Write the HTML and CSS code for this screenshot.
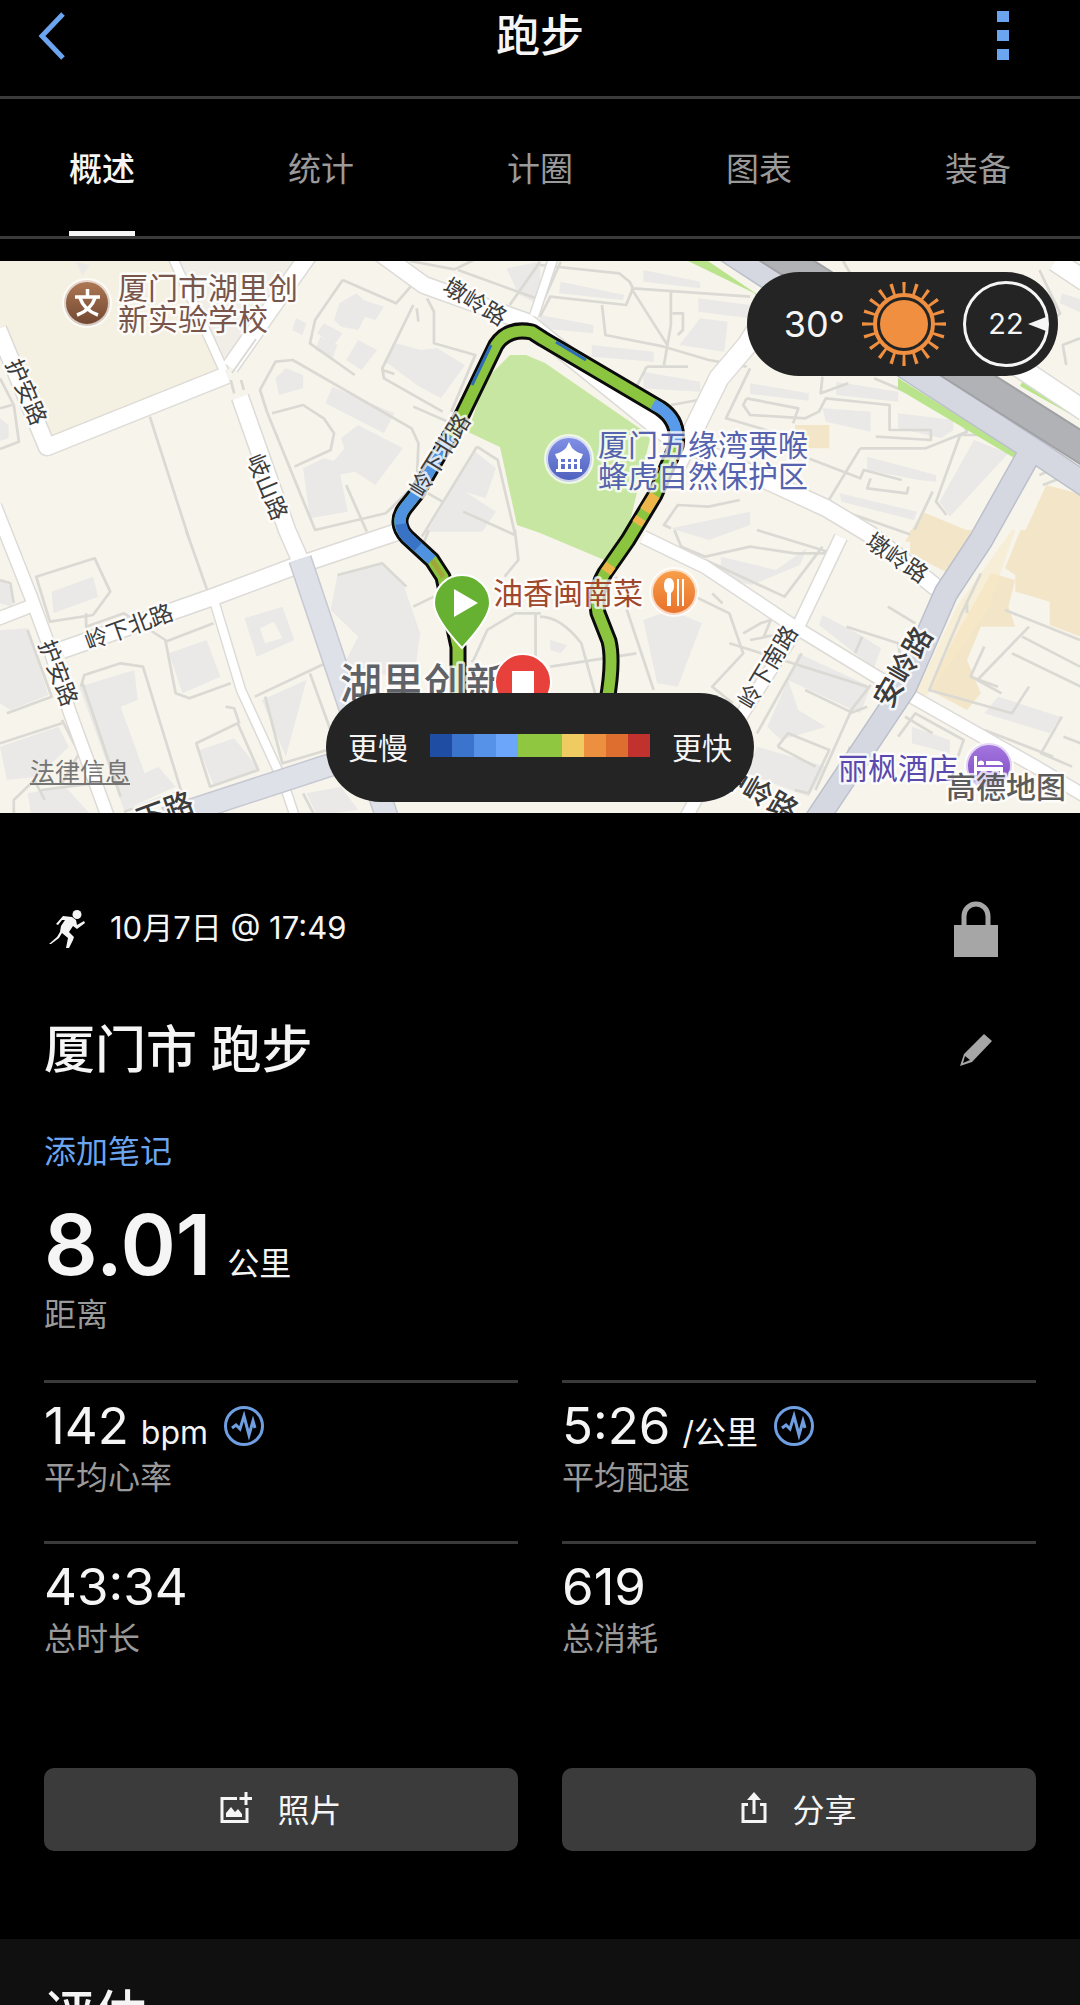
FILE: index.html
```html
<!DOCTYPE html>
<html lang="zh-CN">
  <head>
    <meta charset="UTF-8" />
    <meta name="viewport" content="width=device-width, initial-scale=1.0" />
    <title>跑步</title>
    <link rel="stylesheet" href="styles.css">
  </head>
  <body>
    <header class="top-bar">
      <button class="icon-btn" aria-label="返回">
        <svg width="28" height="48" viewBox="0 0 28 48"><path d="M25 2 4 24l21 22" fill="none" stroke="#6ba5f0" stroke-width="5" /></svg>
      </button>
      <h1>跑步</h1>
      <button class="icon-btn more" aria-label="更多">
        <svg width="12" height="50" viewBox="0 0 12 50" fill="#6ba5f0"><path d="M0 0h12v11H0zM0 19h12v11H0zM0 38h12v11H0z" /></svg>
      </button>
    </header>

    <nav class="tabs">
      <a href="#overview" class="active">概述</a>
      <a href="#stats">统计</a>
      <a href="#laps">计圈</a>
      <a href="#charts">图表</a>
      <a href="#gear">装备</a>
    </nav>

    <main id="overview">
      <section class="map">
        <svg class="map-canvas" viewBox="0 0 1080 552">
          <defs>
            <linearGradient id="brown" x2="0" y2="1"><stop stop-color="#b07a55" /><stop offset="1" stop-color="#6f4530" /></linearGradient>
            <linearGradient id="indigo" x2="0" y2="1"><stop stop-color="#8292e6" /><stop offset="1" stop-color="#4d5fbd" /></linearGradient>
            <linearGradient id="orange" x2="0" y2="1"><stop stop-color="#f8a04a" /><stop offset="1" stop-color="#e8702a" /></linearGradient>
            <linearGradient id="purple" x2="0" y2="1"><stop stop-color="#a678e0" /><stop offset="1" stop-color="#7a48c0" /></linearGradient>
          </defs>
          <rect width="1080" height="552" fill="#f7f4ec" />
          <path d="M0 0h300l-74 112L48 186 0 70z" fill="#f4f0e2" />
          <path d="M172 0h133l-76 106z" fill="#f1eee8" />

          <!-- buildings and lanes, north west -->
          <g transform="translate(0 -6) scale(.3444 .3333)">
            <path class="building" d="M985 145l50-30 20 20 60 20-25 40-30-10-20 40-50-10-20-20zM940 205l55 30-25 35-50-35zM930 245l50 25-15 40-50-25zM1040 255l55 30-45 60-45-30zM1150 265l70 20 50-5 80 50-70 100-70-40-90-70zM965 395l180 80-30 60-170-90zM800 370l30-30 50 20v40l-70 20zM1040 510l130 70-80 110-60-40-50 10-20-30 40-50-10-30zM880 640l60-30 40 10 30 150-110 20zM1380 590l60 50-30 90-60-20 90 60-40 60h-160zM1470 40l98-20v130l-60-30zM0 490l25 20v40l-25 8zM860 190l30 15-12 35-30-15zM220 20l40 10-20 30z" />
            <path class="lane" d="M995 75l155 70 55-65h30M995 75l-80 120-15 70 130 95M1200 150l-90 190 5 30 170 100M1240 130l20 40v95l120 35-70 170M1110 345l35 12M1200 455l100 45M755 405l45-85 50-5 345 205 20 45-5 120-90 90-205 50-140-355zM790 475l90-25 60 40 30 45-10 50-105 50M1005 690l60 140M1210 160l5 40M435 485l115 370M1200 690l85 50M1385 575l60 40 50 220M1385 575l-160 270M1345 770l150 70M1190 18l130 25 60-30M1330 45l240 90M1480 150l88-130M1450 350l60 25 60-20M0 370l40 80 15 110-55 22M0 460l35-10M670 375l10 40M700 375l8 30" />
          </g>

          <!-- north east -->
          <g transform="translate(540 -6) scale(.3444 .3333)">
            <path class="building" d="M60 80l185 40-5 15-185-20zM300 45l165 35v20l-165-20zM0 180l155 30v25L0 220zM150 270l180 20v30l-180-15zM460 130l150 20v40l-150-20zM465 190l80 10-10 90-130-20zM300 350l165 30v30l-165-10zM610 385l170 30v22l-170-20zM860 380l180 30v30l-180-20zM820 460l140 10v60l-130-30zM1040 475l160 20v30l-35 25-125-30zM950 605l200 55v20l-50-5-150-30zM870 715l225 55-10 25-210-55zM1260 555l100 40-170 190-30-45zM1515 115l60 20v40l-65-30zM380 820l230-50v40l-120 45z" />
            <path class="tan" d="M1470 690l110 30v150h-190zM1110 770l140 60v30h-190zM740 510h100v70h-90z" />
            <path class="lane" d="M0 30l230 25 30 25 10 20-20 50-220-25-30 60M60 20L0 160M270 100l340 25M265 100l80 130 25 40-10 60M380 110v100l-10 60M385 175h30v50l-15 15M180 150l10 90 170 35 130 40 110 20M310 335h120M310 335l-40 80M380 450l80-15 60-110M600 430l-10 20 20 30 160 10 40-20 20-40 185 20v75h120v30l-160-10M600 430l150 30-15 45M820 365l-5 50 80-30M610 340l-70 150 200 60-10 40 200 80 10-25 110 30M930 580h190l120-50-20-50-250-110M930 580l-100 170 250 90 60-130M960 670l-10 30 115 15 5-20M1280 540l-60 0-70 200 30 40M1450 45l60 130-40 40-30 60M1460 690l100-40M1450 660l70-30M1500 50l80 60M380 820l-20-10 40-60 90 5 90-20M880 18l40 70M1568 250l-50 20 10 60" />
          </g>

          <!-- south west -->
          <g transform="translate(0 269) scale(.3444 .3333)">
            <path class="building" d="M150 185l120-45 15 60-130 50zM0 300l80-5 60 200-110 45-30-20zM490 370l110-40 40 110-110 50zM230 470l160-50 10 90-50 20 70 200 40-20 50 60-150 70zM0 650l170-60 30 60-90 90-90 10zM710 265l110-35 35 100-110 50zM980 135l130-35 60 60 50 150-20 150-200-60 40-80-80-80zM760 510l130-60-60 230zM580 660l100-35 70 90-130 50zM890 790l100-20 50 70-120 15zM80 790l110-20 70 80H90zM0 150l35 20v60L0 220z" />
            <path d="M755 295l40-20 25 50-50 15z" fill="#f7f4ec" />
            <path class="lane" d="M105 140l170-55 45 100-50 70-125 20zM250 250v40l110-40 120 80 30 160 40 15 120-45M480 335l140-55M235 470l10-35 105-35 65 10 110 370M350 800l-110-340M360 845l170-65M540 0l65 190M740 500l205-100M900 430l70 200M770 500l50 200 130-40M570 640l120-60 60 140-140 50zM695 580l-15-45-25-5M0 640l180-60M20 550l130-50L80 300M180 570l50 100-50 90M40 850v-40l60-60 30 60M120 780l150-20M880 790l30 60M980 135l130-35 70 70M1200 230l60-30M1375 390l40-90 80-50h75M1555 250v140M1370 390l30 50M1260 100l-30-60 15-40M1465 140l40-50-10-90M0 150l30 10 10 60" />
          </g>

          <!-- south east -->
          <g transform="translate(540 269) scale(.3444 .3333)">
            <path class="building" d="M300 270l80-30 90 40-70 190-60-10zM30 330l50 15-20 25-30-10zM525 80l160 40 90-65-20 50-140 60-90-20zM820 255l110 60 60 40-20 60-160-130zM750 370l210 100-30 80-210-100zM720 450l30 90 80 50-130 40-40-40zM630 650l200 60-50 90-180-70zM1330 500l180 60-30 50-190-60zM1080 590l110 40v40l-110-30z" />
            <path class="tan" d="M1395 0h175v320l-90-35v-70l-100-30v-50l-30-20zM1075 0h180l-20 40-50 90-110-60zM1310 130l70 20-20 80 20 60-100 0-40 100 40 100-40 50-110-60 70-150z" />
            <path d="M1370 0l-160 230-120 260 30 10 180-260 80-240z" fill="#f7e9c6" opacity=".55" />
            <path class="lane" d="M390 0l20 50 70 30 130-30 130 20 110 0L630 0M480 90l230 110 110-150M450 200l100 50 40 120-90 100 60 50M590 310l50-30 30-10-20 50 90-10M500 190l30 30M610 330l50-10M0 260q60 0 120 80l40 150M220 140l110 340M30 410l250-40M760 370L630 610M770 480l130 65 60-80M800 780l100-230 50-20M690 650l30-40 120 50-60 130-40-10M690 650l110 60M840 850l60-200M890 290l150 50 10 60M1010 230l80 50M935 320l-20 50M1280 130l-60 130-90 220 240 70 50-80M1420 290l-150 160 70 40M1350 240l218 90M1400 320l168 90M1370 370l200 100M1290 350l-40 90 80 30M1515 560l-60 110 90 40M1520 620l50 20M1040 620l50-70 140 80-20 60M1060 560l80 50M1240 210v40M950 470l-400-130M1290 600l200 80" />
          </g>

          <!-- parks -->
          <path d="M485 119l25-25h16l19 8 100 69 5 7-24 99-17 24-69-29-23-8-17-78-32-15z" fill="#c7e6a2" />
          <path d="M688 0l66 32 10 14 6-4-62-42zM898 117l120 75-2 6-118-70zM1028 110l50 28-8 15-50-28z" fill="#b9e48c" />

          <!-- roads: casing first, surface on top -->
          <g class="casing">
            <path stroke-width="11" d="M172-5l52 115M554-5l-20 60M213 336l28 93 38 83M286 529l10 30" />
            <path stroke-width="15" d="M-5 245l36 91 17 46 21 67 40 110M-5 359l36-14M643 276l62 30 90 60 82 50 76 43 83 47 54 32M841 276l-43 90-55 86-60 110" />
            <path stroke-width="19" d="M380-8l44 32 103 37 140 113 159 73 45 27 72 58M62 389l151-53 80-30 107-36M240 136l47 133 14 32M310-8L230 106M-2 68l49 118 180-72" />
            <path stroke-width="22" d="M805-5l-58 89-28 33-28 57-16 32M1055 0l30 20M1010 100l75 50" />
          </g>
          <g class="surface">
            <path stroke-width="8" d="M172-5l52 115M554-5l-20 60M213 336l28 93 38 83M286 529l10 30" />
            <path stroke-width="12" d="M-5 245l36 91 17 46 21 67 40 110M-5 359l36-14M643 276l62 30 90 60 82 50 76 43 83 47 54 32M841 276l-43 90-55 86-60 110" />
            <path stroke-width="16" d="M380-8l44 32 103 37 140 113 159 73 45 27 72 58M62 389l151-53 80-30 107-36M240 136l47 133 14 32M310-8L230 106M-2 68l49 118 180-72" />
            <path stroke-width="19" d="M805-5l-58 89-28 33-28 57-16 32M1055 0l30 20M1010 100l75 50" />
          </g>
          <path d="M232 112l24-34" stroke="#dcdad6" stroke-width="2" fill="none" />
          <path d="M300 298l45 134 44 130M165 558l159-52 100-30" fill="none" stroke="#c6c9d2" stroke-width="24" />
          <path d="M300 298l45 134 44 130M165 558l159-52 100-30" fill="none" stroke="#dfe1e8" stroke-width="21" />
          <path d="M700-28l230 150 102 66-51 91-35 53-41 94-90 135M1032 188l60 40" fill="none" stroke="#bcc0cb" stroke-width="25" />
          <path d="M700-28l230 150 102 66-51 91-35 53-41 94-90 135M1032 188l60 40" fill="none" stroke="#d5d8e1" stroke-width="22" />
          <path d="M740-30l230 146 120 76" fill="none" stroke="#a1a2a6" stroke-width="31" />
          <path d="M740-30l230 146 120 76" fill="none" stroke="#b1b2b5" stroke-width="27" />

          <g class="road-names">
            <text transform="translate(475 41) rotate(31)">墩岭路</text>
            <text transform="translate(26 131) rotate(67)">护安路</text>
            <text transform="translate(267 226) rotate(67)">岐山路</text>
            <text transform="translate(129 366) rotate(-20)">岭下北路</text>
            <text transform="translate(58 412) rotate(69)">护安路</text>
            <text transform="translate(897 297) rotate(34)">墩岭路</text>
            <text transform="translate(768 406) rotate(-59)">岭下南路</text>
          </g>

          <!-- recorded track -->
          <g fill="none" stroke-linejoin="round">
            <path d="M458 432V386L443 316 432 299 407 276Q394 262 405 247L417 232 463 152 496 84Q508 66 532 71L543 78 660 147Q680 160 676 185L655 234 628 279 605 312Q594 330 598 352L609 380Q614 400 607 440" stroke="#0b0b0b" stroke-width="17" />
            <path d="M458 432V386L443 316 432 299 407 276Q394 262 405 247L417 232 463 152 496 84Q508 66 532 71L543 78 660 147Q680 160 676 185L655 234 628 279 605 312Q594 330 598 352L609 380Q614 400 607 440" stroke="#8bc53f" stroke-width="11" />
            <path d="M432 299L407 276Q394 262 405 247L417 232 450 175" stroke="#4f92e0" stroke-width="11" />
            <path d="M418 286L407 276Q402 270 401 263" stroke="#3973c6" stroke-width="11" />
            <path d="M653 143l7 4Q680 160 676 185" stroke="#5a9aea" stroke-width="11" />
            <path d="M472 124l19-40M556 81l30 18" stroke="#2f6cb8" stroke-width="3" />
            <path d="M655 234l-10 16M641 257l-4 6M611 304l-5 7" stroke="#eeb64a" stroke-width="11" />
            <path d="M432 299l11 17" stroke="#a0a63a" stroke-width="5" />
          </g>
          <g class="road-names">
            <text transform="translate(440 194) rotate(-58)">岭下北路</text>
          </g>
          <g class="road-names major">
            <text transform="translate(903 406) rotate(-60)">安岭路</text>
            <text transform="translate(758 531) rotate(30)">钟岭路</text>
            <text transform="translate(165 550) rotate(-20)">下路</text>
          </g>

          <!-- places -->
          <g stroke="#fff" stroke-opacity=".7" stroke-width="4">
            <circle cx="87" cy="42" r="23" fill="url(#brown)" />
            <circle cx="569" cy="198" r="23" fill="url(#indigo)" />
            <circle cx="674" cy="331" r="23" fill="url(#orange)" />
            <circle cx="989" cy="505" r="23" fill="url(#purple)" />
          </g>
          <path d="M75 36h25M87.500 28v7M80 37q4 12 18 17M95 37q-4 12-18 17" fill="none" stroke="#fff" stroke-width="3.500" />
          <g fill="#fff">
            <path d="M569 181l3 6q5 5 11 6l-2 5h-24l-2-5q6-1 11-6z" />
            <path d="M558 197h3v11h-3zM565 197h3v11h-3zM571 197h3v11h-3zM577 197h3v11h-3zM558 201h22v2h-22zM556 208h26v3h-26z" />
            <path d="M669 317q5 0 5 8 0 5-3 7v13h-4v-13q-3-2-3-7 0-8 5-8zM677 318h2v27h-2zM682 318h2v27h-2z" />
            <path d="M974 495h3v11h26v8h-3v-4h-23v4h-3zM978 501q3-3 6 0v3h-6zM986 500h13q4 1 4 4h-17z" />
          </g>
          <g class="places">
            <text fill="#79564b"><tspan x="118" y="38">厦门市湖里创</tspan><tspan x="118" y="69">新实验学校</tspan></text>
            <text fill="#5562ae"><tspan x="598" y="195">厦门五缘湾栗喉</tspan><tspan x="598" y="226">蜂虎自然保护区</tspan></text>
            <text x="493" y="343" fill="#a0482b">油香闽南菜</text>
            <text x="838" y="518" fill="#5a4aae">丽枫酒店</text>
            <text x="340" y="438" class="district">湖里创新</text>
            <text x="946" y="537" class="vendor">高德地图</text>
          </g>

          <!-- start and finish -->
          <path d="M462 387Q434 357 434 342a28 28 0 0 1 56 0Q490 357 462 387z" fill="#66b132" stroke="#fff" stroke-width="2" />
          <path d="M454 328v28l24-14z" fill="#fff" />
          <circle cx="523" cy="421" r="28" fill="#e8403a" stroke="#fff" stroke-width="2" />
          <path d="M512 410h22v24h-22z" fill="#fff" />
        </svg>

        <div class="weather">
          <span class="temp">30°</span>
          <svg width="86" height="86" viewBox="-43 -43 86 86">
            <circle r="24" fill="#ef8f3f" />
            <circle r="29" fill="none" stroke="#ef8f3f" stroke-width="4" />
            <circle r="36" fill="none" stroke="#ef8f3f" stroke-width="12" pathLength="180" stroke-dasharray="2.400 6.600" stroke-dashoffset="1.200" />
          </svg>
          <span class="wind">22
            <svg width="18" height="14" viewBox="0 0 18 14"><path d="M0 7 18 0v14z" fill="#f5f5f5" /></svg>
          </span>
        </div>

        <div class="legend">
          <span>更慢</span>
          <div class="pace-scale">
            <i class="pace-1"></i><i class="pace-2"></i><i class="pace-3"></i><i class="pace-4"></i><i class="pace-5"></i><i class="pace-5"></i><i class="pace-6"></i><i class="pace-7"></i><i class="pace-8"></i><i class="pace-9"></i>
          </div>
          <span>更快</span>
        </div>

        <a class="legal" href="#legal">法律信息</a>
      </section>

      <section class="details">
        <div class="row">
          <svg class="runner" width="36" height="38" viewBox="0 0 36 38" fill="#f5f5f5">
            <circle cx="28" cy="4.500" r="4.500" />
            <path d="M14 6l9 1 4 3 1 5 7-4 1 2-8 6-4-3-4 6 5 5-1 3-4 8h-3l2-10-6-5-3 5-8 6-2 0 8-7 3-5 1-6 4-6h-3l-4 5-2-1z" />
          </svg>
          <p class="date">10月7日 @ 17:49</p>
          <button class="icon-btn" aria-label="隐私">
            <svg width="44" height="56" viewBox="0 0 44 56"><path d="M0 24h44v32H0z" fill="#a6a6a6" /><path d="M10 26V15a12 12 0 0 1 24 0v11" fill="none" stroke="#a6a6a6" stroke-width="5" /></svg>
          </button>
        </div>

        <div class="row">
          <h2>厦门市 跑步</h2>
          <button class="icon-btn edit" aria-label="编辑">
            <svg width="32" height="32" viewBox="0 0 32 32"><path fill-rule="evenodd" d="M24 0l8 7-20 21-12 4 4-12zM5 22l-2 7 7-3z" fill="#a6a6a6" /></svg>
          </button>
        </div>

        <a class="add-note" href="#note">添加笔记</a>

        <div class="distance">
          <p class="value">8.01 <small>公里</small></p>
          <p class="label">距离</p>
        </div>

        <div class="stats">
          <div class="stat">
            <p class="value">142 <small>bpm</small>
              <svg class="pulse" width="40" height="40" viewBox="0 0 40 40"><circle cx="20" cy="20" r="18.500" /><path d="M8 22l4-3 4 4 4-13 5 19 4-14 2 7" /></svg>
            </p>
            <p class="label">平均心率</p>
          </div>
          <div class="stat">
            <p class="value">5:26 <small>/公里</small>
              <svg class="pulse" width="40" height="40" viewBox="0 0 40 40"><circle cx="20" cy="20" r="18.500" /><path d="M8 22l4-3 4 4 4-13 5 19 4-14 2 7" /></svg>
            </p>
            <p class="label">平均配速</p>
          </div>
          <div class="stat">
            <p class="value">43:34</p>
            <p class="label">总时长</p>
          </div>
          <div class="stat">
            <p class="value">619</p>
            <p class="label">总消耗</p>
          </div>
        </div>

        <div class="actions">
          <button>
            <svg width="32" height="32" viewBox="0 0 32 32" fill="none" stroke="#f5f5f5" stroke-width="3"><path d="M17 6.500H2v23h25V16M26 0v13M19.500 6.500H32" /><path d="M6 25v-4l5-6 4 5 3-3 4 5v3z" fill="#f5f5f5" stroke="none" /></svg>
            照片
          </button>
          <button>
            <svg width="26" height="32" viewBox="0 0 26 32" fill="none" stroke="#f5f5f5" stroke-width="3"><path d="M7 12.500H2v17h22v-17h-5M13 22V4" /><path d="M13 0l7 8H6z" fill="#f5f5f5" stroke="none" /></svg>
            分享
          </button>
        </div>
      </section>

      <section class="evaluation">
        <h2>评估</h2>
      </section>
    </main>
  </body>
</html>
```

FILE: styles.css
```css
* {
  box-sizing: border-box;
}

body {
  margin: 0;
  background-color: #000;
  color: #f5f5f5;
  font-family: Inter, "Noto Sans CJK SC", sans-serif;
  font-size: 32px;
}

h1,
h2,
p {
  margin: 0;
}

a {
  text-decoration: none;
}

svg {
  display: block;
}

button {
  font-family: inherit;
  cursor: pointer;
}

.icon-btn {
  padding: 0;
  border: none;
  background: none;
}

/* Header */
.top-bar {
  display: grid;
  grid-template-columns: 1fr auto 1fr;
  align-items: center;
  padding: 8px 38px 32px;
  border-bottom: 3px solid #3a3a3a;
}

.top-bar h1 {
  font-size: 44px;
  font-weight: 500;
  line-height: 56px;
}

.icon-btn {
  justify-self: start;
}

.more {
  justify-self: end;
  margin-right: 33px;
}

/* Tabs */
.tabs {
  display: flex;
  justify-content: space-between;
  padding: 0 69px;
  border-bottom: 3px solid #3a3a3a;
}

.tabs a {
  padding-top: 9px;
  border-bottom: 5px solid transparent;
  color: #9a9a9a;
  font-size: 33px;
  line-height: 123px;
}

.tabs a.active {
  border-color: #f5f5f5;
  color: #f5f5f5;
  font-weight: 500;
}

/* Map */
.map {
  position: relative;
  margin-top: 22px;
  overflow: hidden;
}

.map-canvas {
  width: 100%;
  height: auto;
}

.building {
  fill: #eae9e7;
}

.tan {
  fill: #f3e6c8;
}

.lane {
  fill: none;
  stroke: #dad9d3;
  stroke-width: 8;
  stroke-linejoin: round;
}

.casing {
  fill: none;
  stroke: #dddbd7;
  stroke-linejoin: round;
}

.surface {
  fill: none;
  stroke: #fff;
  stroke-linejoin: round;
}

.road-names text,
.places text {
  paint-order: stroke;
  stroke: rgba(255, 255, 255, 0.8);
  stroke-width: 5px;
  stroke-linejoin: round;
}

.road-names text {
  fill: #3c3c3c;
  font-size: 23px;
  text-anchor: middle;
  dominant-baseline: central;
}

.road-names.major text {
  font-size: 29px;
  font-weight: 500;
}

.places text {
  font-size: 30px;
}

.places .district {
  fill: #5f6368;
  font-size: 42px;
  font-weight: 500;
}

.places .vendor {
  fill: #5c5c5c;
  font-weight: 500;
}

.weather,
.legend {
  position: absolute;
  display: flex;
  align-items: center;
  background-color: #242424;
  border-radius: 55px;
}

.weather {
  top: 11px;
  right: 22px;
  gap: 16px;
  height: 104px;
  padding: 0 9px 0 37px;
}

.temp {
  font-size: 36px;
}

.wind {
  position: relative;
  width: 86px;
  height: 86px;
  border: 3px solid #f5f5f5;
  border-radius: 50%;
  font-size: 29px;
  line-height: 80px;
  text-align: center;
}

.wind svg {
  position: absolute;
  top: 33px;
  right: 0;
}

.legend {
  bottom: 11px;
  left: 50%;
  gap: 22px;
  height: 109px;
  padding: 0 22px 4px;
  font-size: 30px;
  transform: translateX(-50%);
}

.pace-scale {
  display: flex;
}

.pace-scale i {
  width: 22px;
  height: 23px;
}

.pace-1 {
  background-color: #1f4da3;
}

.pace-2 {
  background-color: #3b74cd;
}

.pace-3 {
  background-color: #5592e8;
}

.pace-4 {
  background-color: #6ca6fa;
}

.pace-5 {
  background-color: #8fc740;
}

.pace-6 {
  background-color: #f0cb62;
}

.pace-7 {
  background-color: #ec8f3e;
}

.pace-8 {
  background-color: #dd6e30;
}

.pace-9 {
  background-color: #c1322f;
}

.legal {
  position: absolute;
  bottom: 24px;
  left: 30px;
  color: #757575;
  font-size: 25px;
  line-height: 34px;
  text-decoration: underline;
}

/* Activity details */
.details {
  padding: 86px 44px 88px;
}

.row {
  display: flex;
  align-items: center;
  height: 60px;
  margin-bottom: 61px;
}

.row .icon-btn {
  margin-left: auto;
  margin-right: 38px;
}

.row .edit {
  margin-right: 44px;
}

.runner {
  margin-left: 5px;
}

.date {
  padding-bottom: 3px;
  margin-left: 25px;
  font-size: 31px;
  line-height: 40px;
}

.details h2,
.evaluation h2 {
  font-size: 51px;
  font-weight: 500;
  line-height: 60px;
}

.add-note {
  display: block;
  margin-top: -9px;
  color: #6ba5f0;
  line-height: 40px;
}

.value {
  display: flex;
  align-items: baseline;
  gap: 12px;
  height: 60px;
  font-size: 51px;
  line-height: 60px;
}

.value small {
  font-size: 32px;
}

.label {
  color: #9a9a9a;
  line-height: 40px;
}

.distance {
  margin: 23px 0 45px;
}

.distance .value {
  gap: 16px;
  height: 100px;
  font-size: 84px;
  font-weight: 600;
  line-height: 100px;
}

.distance small {
  font-weight: 400;
}

.stats {
  display: grid;
  grid-template-columns: 1fr 1fr;
  column-gap: 44px;
}

.stat {
  padding: 13px 0 43px;
  border-top: 3px solid #3a3a3a;
}

.stat .label {
  margin-top: 2px;
}

.pulse {
  align-self: center;
  margin-left: 4px;
  fill: none;
  stroke: #6f9fe0;
  stroke-width: 3;
}

.actions {
  display: grid;
  grid-template-columns: 1fr 1fr;
  gap: 44px;
  margin-top: 66px;
}

.actions button {
  display: flex;
  justify-content: center;
  align-items: center;
  gap: 25px;
  height: 83px;
  padding-bottom: 5px;
  border: none;
  border-radius: 10px;
  background-color: #3b3b3b;
  color: #f5f5f5;
  font-size: 32px;
}

/* Evaluation */
.evaluation {
  padding: 46px 44px;
  background-color: #101010;
}
```
